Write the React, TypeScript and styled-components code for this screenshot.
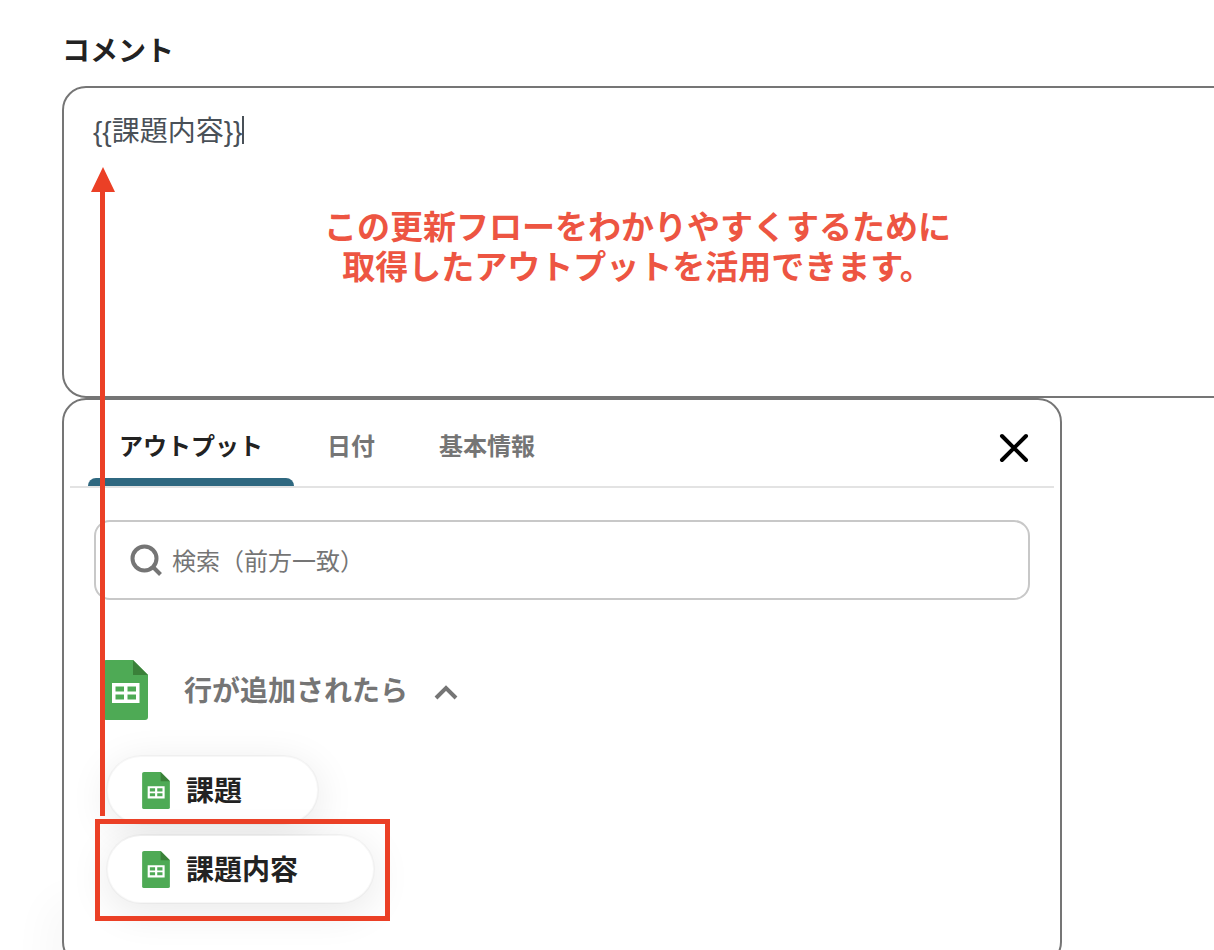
import React, { useState } from "react";
import styled, { createGlobalStyle } from "styled-components";

const GlobalStyle = createGlobalStyle`
  *, *::before, *::after { box-sizing: border-box; }
  body {
    margin: 0;
    background: #fff;
    color: #222;
    font-family: "Liberation Sans", "Noto Sans CJK JP", sans-serif;
  }
  button, input, textarea { font: inherit; color: inherit; }
  button { border: 0; background: none; padding: 0; cursor: pointer; }
`;

const Page = styled.main`
  position: relative;
  height: 100vh;
  overflow: hidden;
  padding: 32px 0 0 62px;
`;

const FieldLabel = styled.label`
  display: block;
  margin-bottom: 14px;
  font-size: 28px;
  line-height: 40px;
  font-weight: 700;
`;

const CommentField = styled.div`
  position: relative;
  height: 312px;
  margin-right: -32px;
`;

const CommentInput = styled.textarea`
  display: block;
  width: 100%;
  height: 100%;
  padding: 24px 29px;
  border: 2px solid #757575;
  border-radius: 24px;
  background: #fff;
  color: #495057;
  font-size: 28px;
  line-height: 40px;
  resize: none;
  outline: 0;
`;

const Caret = styled.span`
  position: absolute;
  top: 30px;
  left: 180px;
  width: 2px;
  height: 28px;
  background: #495057;
`;

const Note = styled.p`
  position: absolute;
  top: 122px;
  left: 262px;
  margin: 0;
  color: #ed5542;
  font-size: 33px;
  line-height: 40px;
  font-weight: 700;
  text-align: center;
  white-space: nowrap;
`;

const Panel = styled.section`
  max-width: 1000px;
  min-height: 568px;
  padding: 0 6px 60px;
  border: 2px solid #757575;
  border-radius: 24px;
  background: #fff;
  box-shadow: -16px 500px 40px rgba(0, 40, 30, 0.03);
`;

const TabBar = styled.div`
  display: flex;
  align-items: center;
  justify-content: space-between;
  height: 88px;
  padding: 0 24px 0 18px;
  border-bottom: 2px solid #e3e3e3;
`;

const TabList = styled.div`
  display: flex;
  align-self: stretch;
  gap: 2px;
`;

const Tab = styled.button<{ $active?: boolean }>`
  position: relative;
  padding: 8px 31px 0;
  color: ${(p) => (p.$active ? "#222" : "#757575")};
  font-size: 24px;
  line-height: 32px;
  font-weight: 700;

  &::after {
    content: "";
    display: ${(p) => (p.$active ? "block" : "none")};
    position: absolute;
    inset: auto 0 0;
    height: 8px;
    border-radius: 8px 8px 0 0;
    background: #2f6880;
  }
`;

const CloseButton = styled.button`
  display: flex;
  margin-top: 10px;
`;

const SearchBox = styled.label`
  display: flex;
  align-items: center;
  gap: 10px;
  height: 80px;
  margin: 32px 24px 0;
  padding: 0 34px;
  border: 2px solid #c8c8c8;
  border-radius: 16px;
  color: #757575;
`;

const SearchInput = styled.input`
  flex: 1;
  min-width: 0;
  padding: 4px 0 0;
  border: 0;
  outline: 0;
  background: none;
  font-size: 24px;
  line-height: 32px;
  &::placeholder { color: #757575; opacity: 1; }
`;

const GroupToggle = styled.button`
  display: flex;
  align-items: center;
  height: 60px;
  margin: 60px 0 0 33px;
  color: #757575;
  font-size: 28px;
  line-height: 40px;
  font-weight: 700;
`;

const GroupTitle = styled.span`
  display: flex;
  align-items: center;
  gap: 26px;
  margin-left: 36px;
  padding-top: 4px;
`;

const ChipList = styled.ul`
  display: flex;
  flex-direction: column;
  align-items: flex-start;
  gap: 9px;
  margin: 35px 0 0 36px;
  padding: 0;
  list-style: none;
`;

const ChipItem = styled.li`
  position: relative;
`;

const Chip = styled.button`
  display: flex;
  align-items: center;
  gap: 16px;
  height: 70px;
  padding: 0 75px 0 34px;
  border: 2px solid rgba(0, 0, 0, 0.03);
  border-radius: 35px;
  background: #fff;
  background-clip: padding-box;
  box-shadow: 0 8px 40px rgba(0, 0, 0, 0.09);
  font-size: 28px;
  line-height: 40px;
  font-weight: 700;
`;

const ChipText = styled.span`
  padding-top: 4px;
`;

const Highlight = styled.span`
  position: absolute;
  inset: -15px -15px -17px -11px;
  border: 5px solid #eb4026;
  pointer-events: none;
`;

const Arrow = styled.svg`
  position: absolute;
  top: 167px;
  left: 91px;
  pointer-events: none;
`;

function SheetIcon({ width, height }: { width: number; height: number }) {
  return (
    <svg width={width} height={height} viewBox="0 0 45 60" aria-hidden="true">
      <path fill="#4eaa55" d="M3 0H30L45 15V57Q45 60 42 60H3Q0 60 0 57V3Q0 0 3 0Z" />
      <path fill="#3a8139" d="M30 0L45 15H30Z" />
      <path
        fill="#fff"
        fillRule="evenodd"
        d="M9 23H36.500V43H9ZM12.500 26.500V31.500H21V26.500ZM24.500 26.500V31.500H33V26.500ZM12.500 34.500V39.500H21V34.500ZM24.500 34.500V39.500H33V34.500Z"
      />
    </svg>
  );
}

const tabs = ["アウトプット", "日付", "基本情報"];
const outputs = [
  { name: "課題", highlighted: false },
  { name: "課題内容", highlighted: true },
];

export default function App() {
  const [active, setActive] = useState(tabs[0]);
  const [open, setOpen] = useState(true);

  return (
    <Page>
      <GlobalStyle />
      <FieldLabel htmlFor="comment">コメント</FieldLabel>
      <CommentField>
        <CommentInput id="comment" defaultValue="{{課題内容}}" spellCheck={false} />
        <Caret />
        <Note>
          この更新フローをわかりやすくするために
          <br />
          取得したアウトプットを活用できます。
        </Note>
      </CommentField>

      <Panel>
        <TabBar>
          <TabList role="tablist">
            {tabs.map((tab) => (
              <Tab
                key={tab}
                type="button"
                role="tab"
                aria-selected={tab === active}
                $active={tab === active}
                onClick={() => setActive(tab)}
              >
                {tab}
              </Tab>
            ))}
          </TabList>
          <CloseButton type="button" aria-label="閉じる">
            <svg width="32" height="32" viewBox="0 0 32 32" fill="none" stroke="#000" strokeWidth="4" strokeLinecap="round">
              <path d="M4 4L28 28M28 4L4 28" />
            </svg>
          </CloseButton>
        </TabBar>

        <SearchBox>
          <svg width="32" height="32" viewBox="0 0 32 32" fill="none" stroke="#757575" strokeWidth="4" aria-hidden="true">
            <circle cx="14.500" cy="14.500" r="12" />
            <path d="M23 23L30.500 30.500" />
          </svg>
          <SearchInput type="text" aria-label="検索" placeholder="検索（前方一致）" />
        </SearchBox>

        <GroupToggle type="button" aria-expanded={open} onClick={() => setOpen(!open)}>
          <SheetIcon width={45} height={60} />
          <GroupTitle>
            行が追加されたら
            <svg width="24" height="16" viewBox="0 0 24 16" fill="none" stroke="#757575" strokeWidth="4" aria-hidden="true">
              <path d="M2 14L12 4L22 14" />
            </svg>
          </GroupTitle>
        </GroupToggle>

        {open && (
          <ChipList>
            {outputs.map((output) => (
              <ChipItem key={output.name}>
                <Chip type="button">
                  <SheetIcon width={28} height={37} />
                  <ChipText>{output.name}</ChipText>
                </Chip>
                {output.highlighted && <Highlight />}
              </ChipItem>
            ))}
          </ChipList>
        )}
      </Panel>

      <Arrow width="24" height="649" viewBox="0 0 24 649" fill="#eb4026" aria-hidden="true">
        <path d="M12 0L24 25H14V649H9V25H0Z" />
      </Arrow>
    </Page>
  );
}
